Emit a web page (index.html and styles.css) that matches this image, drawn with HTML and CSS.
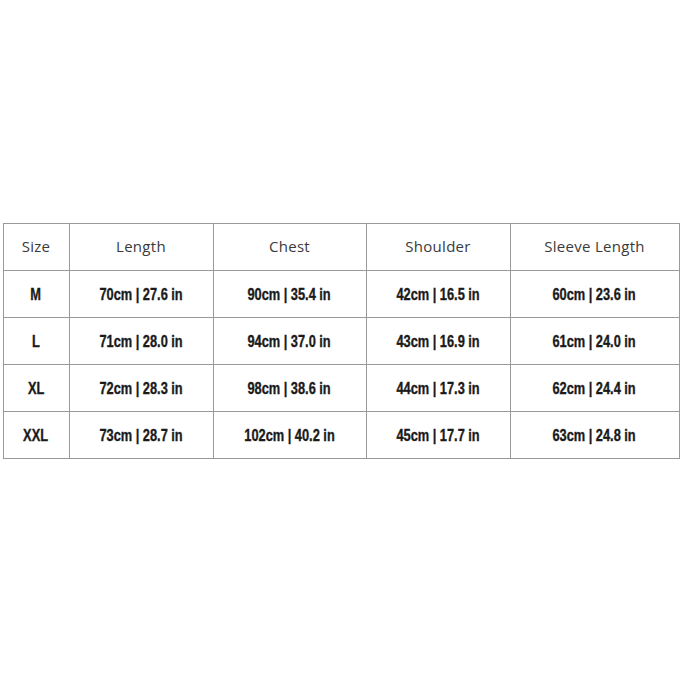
FILE: index.html
```html
<!DOCTYPE html>
<html>
<head>
<meta charset="utf-8">
<link rel="stylesheet" href="styles.css">
</head>
<body>
<div class="page">
<table class="size-table">
<colgroup>
<col class="c1"><col class="c2"><col class="c3"><col class="c4"><col class="c5">
</colgroup>
<thead>
<tr><th>Size</th><th>Length</th><th>Chest</th><th>Shoulder</th><th>Sleeve Length</th></tr>
</thead>
<tbody>
<tr><td><span class="v">M</span></td><td><span class="v">70cm | 27.6 in</span></td><td><span class="v">90cm | 35.4 in</span></td><td><span class="v">42cm | 16.5 in</span></td><td><span class="v">60cm | 23.6 in</span></td></tr>
<tr><td><span class="v">L</span></td><td><span class="v">71cm | 28.0 in</span></td><td><span class="v">94cm | 37.0 in</span></td><td><span class="v">43cm | 16.9 in</span></td><td><span class="v">61cm | 24.0 in</span></td></tr>
<tr><td><span class="v">XL</span></td><td><span class="v">72cm | 28.3 in</span></td><td><span class="v">98cm | 38.6 in</span></td><td><span class="v">44cm | 17.3 in</span></td><td><span class="v">62cm | 24.4 in</span></td></tr>
<tr><td><span class="v">XXL</span></td><td><span class="v">73cm | 28.7 in</span></td><td><span class="v">102cm | 40.2 in</span></td><td><span class="v">45cm | 17.7 in</span></td><td><span class="v">63cm | 24.8 in</span></td></tr>
</tbody>
</table>
</div>
</body>
</html>
```
FILE: styles.css
```css
html, body {
  margin: 0;
  padding: 0;
  background: #ffffff;
}
.page {
  height: 682px;
  display: flex;
  align-items: center;
  justify-content: center;
}
.size-table {
  border-collapse: collapse;
  width: 676px;
  table-layout: fixed;
}
.c1 { width: 66px; }
.c2 { width: 144px; }
.c3 { width: 153px; }
.c4 { width: 144px; }
.c5 { width: 169px; }
.size-table th,
.size-table td {
  border: 1px solid #999999;
  height: 44px;
  padding: 0;
  text-align: center;
  vertical-align: middle;
}
.size-table th {
  font-family: "Open Sans", "DejaVu Sans", sans-serif;
  font-weight: 400;
  font-size: 15px;
  color: #3a3a3a;
  letter-spacing: 0.3px;
  padding-bottom: 2px;
}
.size-table td {
  font-family: "Liberation Sans", Arial, sans-serif;
  font-weight: 700;
  font-size: 16px;
  color: #1a1a1a;
  white-space: nowrap;
  padding-top: 2px;
}
.v {
  display: inline-block;
  transform: scaleX(0.8);
  -webkit-text-stroke: 0.35px #1a1a1a;
}
```
